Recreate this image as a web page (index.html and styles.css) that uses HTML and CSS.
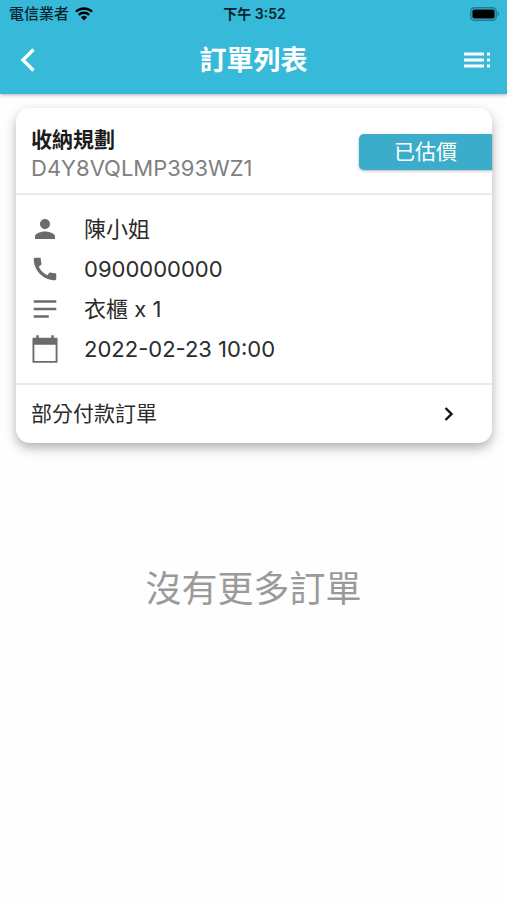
FILE: index.html
```html
<!DOCTYPE html>
<html lang="zh-Hant">
<head>
<meta charset="utf-8">
<meta name="viewport" content="width=device-width, initial-scale=1">
<title>訂單列表</title>
<link rel="stylesheet" href="styles.css">
</head>
<body>
<header class="top">
  <div class="status">
    <div class="carrier">
      <span>電信業者</span>
      <svg class="wifi" width="18" height="14" viewBox="0 0 18 14" aria-hidden="true">
        <g fill="none" stroke="currentColor" stroke-width="2.3">
          <path d="M.9 4.8a11.6 11.6 0 0 1 16.2 0"/>
          <path d="M3.8 7.9a7.4 7.4 0 0 1 10.4 0"/>
        </g>
        <path d="M5.9 10.2a4.5 4.5 0 0 1 6.2 0L9 13.4z" fill="currentColor"/>
      </svg>
    </div>
    <span class="clock">下午 3:52</span>
    <svg class="battery" width="30" height="14" viewBox="0 0 30 14" aria-hidden="true">
      <rect x=".8" y=".8" width="25.4" height="12.4" rx="3.6" fill="none" stroke="#1e7d92" stroke-width="1.4"/>
      <rect x="2.4" y="2.4" width="22.2" height="9.2" rx="2" fill="#000"/>
      <path d="M27.6 4.8a2.4 2.4 0 0 1 0 4.4z" fill="#1e7d92"/>
    </svg>
  </div>
  <nav class="bar">
    <button class="icon-button start" type="button" aria-label="返回">
      <svg width="16" height="26" viewBox="0 0 16 26"><path d="M13.5 2.5 3 13l10.500 10.500" fill="none" stroke="currentColor" stroke-width="3.4"/></svg>
    </button>
    <h1>訂單列表</h1>
    <button class="icon-button end" type="button" aria-label="選單">
      <svg width="28" height="18" viewBox="0 0 28 18" fill="currentColor"><path d="M1 1.500h20v3H1zM1 7.500h20v3H1zM1 13.500h20v3H1zM24 1.500h3v3h-3zM24 7.500h3v3h-3zM24 13.500h3v3h-3z"/></svg>
    </button>
  </nav>
</header>
<main>
  <article class="card">
    <div class="card-head">
      <div>
        <h2>收納規劃</h2>
        <p class="order-id">D4Y8VQLMP393WZ1</p>
      </div>
      <span class="badge">已估價</span>
    </div>
    <ul class="details">
      <li>
        <svg width="30" height="30" viewBox="0 0 24 24" aria-hidden="true"><path d="M12 12c2.210 0 4-1.790 4-4s-1.790-4-4-4-4 1.790-4 4 1.790 4 4 4zm0 2c-2.670 0-8 1.340-8 4v2h16v-2c0-2.660-5.330-4-8-4z"/></svg>
        <span>陳小姐</span>
      </li>
      <li>
        <svg width="30" height="30" viewBox="0 0 24 24" aria-hidden="true"><path d="M20.010 15.380c-1.230 0-2.420-.2-3.530-.56a.98.98 0 0 0-1.010.24l-1.570 1.970c-2.830-1.350-5.480-3.900-6.890-6.830l1.950-1.660c.27-.28.35-.67.240-1.020-.37-1.110-.56-2.300-.56-3.530 0-.54-.45-.99-.99-.99H4.190C3.650 3 3 3.240 3 3.990 3 13.280 10.730 21 20.010 21c.71 0 .99-.63.990-1.180v-3.450c0-.54-.45-.99-.99-.99z"/></svg>
        <span>0900000000</span>
      </li>
      <li>
        <svg width="30" height="30" viewBox="0 0 24 24" aria-hidden="true"><path d="M3 5h18v2H3zM3 11h18v2H3zM3 17h12v2H3z"/></svg>
        <span>衣櫃 x 1</span>
      </li>
      <li>
        <svg width="30" height="30" viewBox="0 0 24 24" aria-hidden="true"><path d="M22 3h-3V1h-2v2H7V1H5v2H2v20h20V3zm-1.500 18.500h-17V8.500h17v13z"/></svg>
        <span>2022-02-23 10:00</span>
      </li>
    </ul>
    <a class="card-foot" href="#">
      <span>部分付款訂單</span>
      <svg width="10" height="16" viewBox="0 0 10 16" aria-hidden="true"><path d="m1.500 2 6 6-6 6" fill="none" stroke="currentColor" stroke-width="2.400"/></svg>
    </a>
  </article>
  <p class="empty">沒有更多訂單</p>
</main>
</body>
</html>
```
FILE: styles.css
```css
* {
  box-sizing: border-box;
}

body,
h1,
h2,
p,
ul {
  margin: 0;
  padding: 0;
}

body {
  background: #fefefe;
  color: #2b2b2b;
  font-family: Inter, "Noto Sans CJK TC", sans-serif;
  font-size: 21px;
}

svg {
  display: block;
  flex: none;
}

.top {
  background: #37bada;
  box-shadow: 0 1px 4px rgba(0, 0, 0, 0.3);
}

.status {
  display: grid;
  grid-template-columns: 1fr auto 1fr;
  align-items: center;
  height: 28px;
  padding: 0 7px 0 9px;
  color: #06242b;
  font-size: 14px;
  font-weight: 600;
  line-height: 20px;
}

.carrier {
  display: flex;
  align-items: center;
  gap: 6px;
  font-size: 15px;
  font-weight: 500;
}

.wifi {
  color: #000;
}

.battery {
  justify-self: end;
}

.bar {
  display: grid;
  grid-template-columns: 1fr auto 1fr;
  align-items: center;
  height: 66px;
  padding: 0 16px 2px;
  color: #fff;
}

.bar h1 {
  padding-top: 2px;
  font-size: 27px;
  font-weight: 700;
  line-height: 40px;
}

.icon-button {
  padding: 0;
  border: 0;
  background: none;
  color: inherit;
}

.start {
  justify-self: start;
  padding-left: 4px;
}

.end {
  justify-self: end;
}

.card {
  margin: 14px 15px 0 16px;
  border-radius: 14px;
  background: #fff;
  box-shadow: 0 5px 12px rgba(0, 0, 0, 0.3);
}

.card-head {
  display: flex;
  align-items: center;
  justify-content: space-between;
  height: 87px;
  padding: 2px 0 0 15px;
  border-bottom: 2px solid #ebebeb;
}

.card-head h2 {
  padding-top: 4px;
  color: #1c1c1c;
  font-size: 21px;
  font-weight: 700;
  line-height: 28px;
}

.order-id {
  color: #808080;
  font-size: 22px;
  line-height: 28px;
}

.badge {
  width: 133px;
  border-radius: 5px 0 0 5px;
  background: #3badca;
  box-shadow: 0 1px 3px rgba(0, 0, 0, 0.3);
  color: #fff;
  line-height: 36px;
  text-align: center;
}

.details {
  padding: 14px 14px;
  border-bottom: 2px solid #ebebeb;
  font-size: 22px;
  line-height: 32px;
  list-style: none;
}

.details li {
  display: flex;
  align-items: center;
  gap: 24px;
  height: 40px;
}

.details svg {
  fill: #6b6b6b;
}

.card-foot {
  display: flex;
  align-items: center;
  justify-content: space-between;
  height: 58px;
  padding: 0 38px 0 15px;
  color: inherit;
  line-height: 28px;
  text-decoration: none;
}

.card-foot svg {
  color: #111;
}

.empty {
  margin-top: 118px;
  color: #9a9a9a;
  font-size: 36px;
  line-height: 56px;
  text-align: center;
}
```
